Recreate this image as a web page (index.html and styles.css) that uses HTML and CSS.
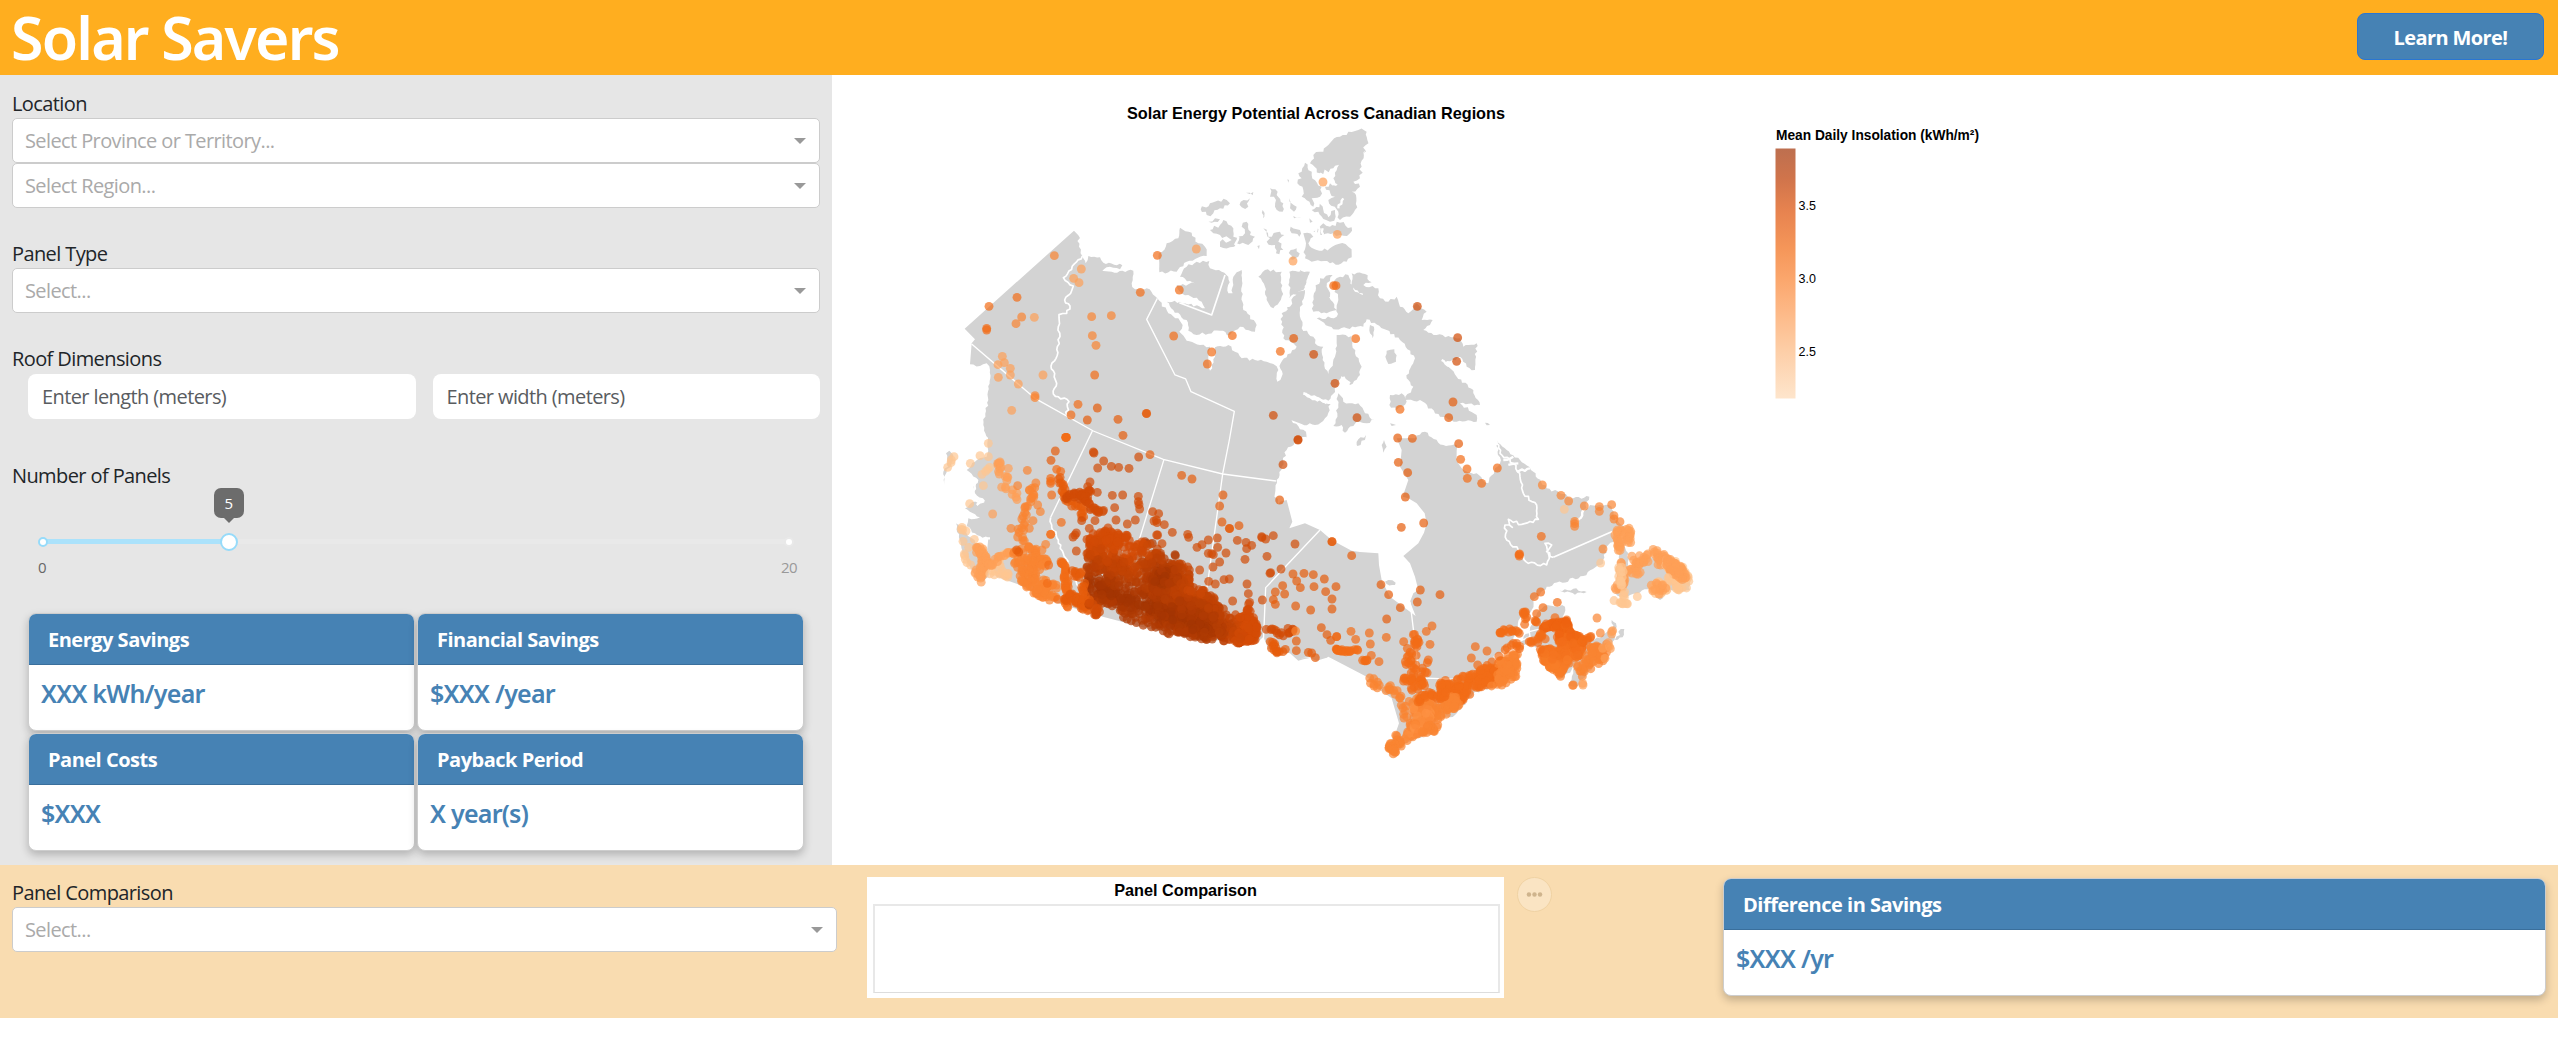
FILE: index.html
```html
<!DOCTYPE html>
<html lang="en">
<head>
<meta charset="utf-8">
<title>Solar Savers</title>
<link rel="stylesheet" href="styles.css">
</head>
<body>
<header class="topbar">
  <h1>Solar Savers</h1>
  <button class="learn">Learn More!</button>
</header>
<main class="main">
  <aside class="panel">
    <section class="field location">
      <label>Location</label>
      <div class="select">Select Province or Territory...<i class="caret"></i></div>
      <div class="select">Select Region...<i class="caret"></i></div>
    </section>
    <section class="field type">
      <label>Panel Type</label>
      <div class="select">Select...<i class="caret"></i></div>
    </section>
    <section class="field roof">
      <label>Roof Dimensions</label>
      <div class="inputs">
        <div class="input">Enter length (meters)</div>
        <div class="input">Enter width (meters)</div>
      </div>
    </section>
    <section class="field count">
      <label>Number of Panels</label>
      <div class="slider">
        <div class="fill"></div>
        <span class="stop on"></span>
        <span class="stop end"></span>
        <span class="handle"><span class="tip">5</span></span>
      </div>
      <div class="marks"><span>0</span><span class="max">20</span></div>
    </section>
    <section class="cards">
      <article class="card"><h2>Energy Savings</h2><p>XXX kWh/year</p></article>
      <article class="card"><h2>Financial Savings</h2><p>$XXX /year</p></article>
      <article class="card"><h2>Panel Costs</h2><p>$XXX</p></article>
      <article class="card"><h2>Payback Period</h2><p>X year(s)</p></article>
    </section>
  </aside>
  <svg class="map" viewBox="832 75 1726 790" role="img">
    <defs>
      <linearGradient id="ramp" x1="0" y1="0" x2="0" y2="1">
        <stop offset="0" stop-color="#bd6f4f"/>
        <stop offset=".12" stop-color="#d0744b"/>
        <stop offset=".25" stop-color="#e7834f"/>
        <stop offset=".4" stop-color="#f59659"/>
        <stop offset=".52" stop-color="#fba66c"/>
        <stop offset=".65" stop-color="#fdb886"/>
        <stop offset=".8" stop-color="#fdcda5"/>
        <stop offset="1" stop-color="#fee5cc"/>
      </linearGradient>
    </defs>
    <g transform="translate(920 80) scale(.33333)">
      <g id="land" fill="#d3d3d3"></g>
      <g id="lines" fill="none" stroke="#fff" stroke-width="4" stroke-linejoin="round"></g>
      <g id="dots" fill-opacity=".7"></g>
    </g>
    <g class="chart-text">
      <text class="map-title" x="1127" y="119" textLength="378">Solar Energy Potential Across Canadian Regions</text>
      <text class="legend-title" x="1776" y="140" textLength="203">Mean Daily Insolation (kWh/m²)</text>
      <rect x="1775.5" y="148.5" width="20" height="250" fill="url(#ramp)"/>
      <text x="1798.5" y="210">3.5</text>
      <text x="1798.5" y="283">3.0</text>
      <text x="1798.5" y="356">2.5</text>
    </g>
  </svg>
</main>
<footer class="compare">
  <section class="pick">
    <label>Panel Comparison</label>
    <div class="select">Select...<i class="caret"></i></div>
  </section>
  <section class="chart">
    <h3>Panel Comparison</h3>
    <div class="plot"></div>
  </section>
  <button class="more" aria-label="Chart actions">
    <svg viewBox="0 0 34 34"><circle cx="11.3" cy="17" r="2.3"/><circle cx="17" cy="17" r="2.3"/><circle cx="22.7" cy="17" r="2.3"/></svg>
  </button>
  <article class="card diff"><h2>Difference in Savings</h2><p>$XXX /yr</p></article>
</footer>
<script src="map.js"></script>
</body>
</html>
```
FILE: styles.css
```css
* { box-sizing: border-box; }
body {
  margin: 0;
  background: #fff;
  color: #212529;
  font: 20px/30px "Open Sans", "Noto Sans", sans-serif;
  letter-spacing: -0.6px;
}
h1, h2, h3, p { margin: 0; }
.topbar {
  display: flex;
  justify-content: space-between;
  align-items: flex-start;
  height: 75px;
  padding: 0 14px 0 11px;
  background: #ffae1f;
}
.topbar h1 {
  color: #fff;
  font-family: "Noto Sans", "Open Sans", sans-serif;
  font-size: 59px;
  font-weight: 600;
  line-height: 75px;
  letter-spacing: -1.8px;
}
.learn {
  width: 187px;
  height: 47px;
  margin-top: 13px;
  padding: 2px 0 0;
  border: 1px solid #2a76d2;
  border-radius: 8px;
  background: #4682b4;
  color: #fff;
  font: 700 20px/30px "Open Sans", sans-serif;
  letter-spacing: -0.6px;
}
.main { display: flex; height: 790px; }
.panel {
  display: flex;
  flex-direction: column;
  width: 832px;
  padding: 13px 12px 0;
  background: #e6e6e6;
}
label { display: block; height: 30px; line-height: 32px; }
.select {
  display: flex;
  justify-content: space-between;
  align-items: center;
  height: 45px;
  padding: 0 13px 0 12px;
  border: 1px solid #ccc;
  border-radius: 5px;
  background: #fff;
  color: #aaa;
}
.caret {
  border: 6px solid transparent;
  border-top: 6px solid #999;
  border-bottom: 0;
}
.location { height: 150px; }
.type { height: 105px; }
.roof { height: 117px; }
.roof .inputs { display: flex; gap: 17px; padding: 1px 0 0 16px; }
.input {
  flex: 1;
  height: 45px;
  padding: 8px 14px;
  border-radius: 8px;
  background: #fff;
  color: #595c5f;
}
.count { height: 153px; }
.slider {
  position: relative;
  width: 746px;
  height: 5px;
  margin: 49px 0 0 31px;
  border-radius: 6px;
  background: #e9e9e9;
}
.fill { width: 25%; height: 5px; background: #abe2fb; }
.stop {
  position: absolute;
  top: -2.5px;
  left: -5px;
  width: 10px;
  height: 10px;
  border: 2px solid #96dbfa;
  border-radius: 50%;
  background: #fff;
}
.stop.end { left: auto; right: -5px; border-color: #e9e9e9; }
.handle {
  position: absolute;
  top: -6.5px;
  left: calc(25% - 10px);
  width: 18px;
  height: 18px;
  border: 2px solid #96dbfa;
  border-radius: 50%;
  background: #fff;
}
.tip {
  position: absolute;
  left: -8px;
  bottom: 31px;
  width: 30px;
  height: 30px;
  border-radius: 7px;
  background: #6c6c6c;
  color: #fff;
  font-size: 15px;
  text-align: center;
}
.tip::after {
  content: "";
  position: absolute;
  left: 10px;
  top: 30px;
  border: 5px solid transparent;
  border-top-color: #6c6c6c;
  border-bottom: 0;
}
.marks {
  display: flex;
  justify-content: space-between;
  margin: 8px 23px 0 26px;
  color: #666;
  font-size: 15px;
}
.marks .max { color: #999; }
.cards {
  display: grid;
  grid-template-columns: 387px 387px;
  gap: 2px;
  padding-left: 16px;
}
.card {
  height: 118px;
  border: 1px solid #cdcdcd;
  border-radius: 8px;
  background: #fff;
  box-shadow: 0 4px 8px rgba(0, 0, 0, .22);
  overflow: hidden;
}
.card h2 {
  height: 51px;
  padding: 11px 19px;
  border-bottom: 1px solid #3a6f9c;
  background: #4682b4;
  color: #fff;
  font-size: 20px;
  font-weight: 700;
  line-height: 30px;
  letter-spacing: -0.5px;
}
.card p {
  padding: 13px 12px;
  color: #4682b4;
  font-family: "Noto Sans", "Open Sans", sans-serif;
  font-size: 25px;
  font-weight: 600;
  letter-spacing: -0.75px;
}
.map { width: 1726px; height: 790px; }
.chart-text { font: 12.5px "Liberation Sans", Arial, sans-serif; letter-spacing: 0; }
.map-title { font-size: 16.25px; font-weight: 700; }
.legend-title { font-size: 13.75px; font-weight: 700; }
.compare {
  display: flex;
  align-items: flex-start;
  height: 153px;
  padding: 12px;
  background: #f9dcb0;
}
.pick { width: 825px; }
.chart {
  width: 637px;
  height: 121px;
  margin-left: 30px;
  padding: 3px 4px 0 6px;
  background: #fff;
}
.chart h3 {
  height: 24px;
  padding-right: 2px;
  color: #000;
  font: 700 16.25px/20px "Liberation Sans", Arial, sans-serif;
  letter-spacing: 0;
  text-align: center;
}
.plot { height: 89px; border: 2px solid #e8e8e8; border-bottom: 1px solid #ddd; }
.more {
  width: 35px;
  height: 35px;
  margin-left: 13px;
  padding: 0;
  border: 1px solid #f0d2a3;
  border-radius: 50%;
  background: #fae4c3;
}
.more svg { display: block; width: 33px; height: 33px; fill: #cfb48d; }
.diff { width: 823px; margin: 1px 0 0 auto; }
```
FILE: map.js
```js
// Map sheets share one grid; each offset moves a sheet's points onto it.
const SHEET = { A: [0, 0], B: [1140, 0], C: [0, 1050], D: [1140, 1050], E: [750, 120] };
let seed = 7;
const rnd = () => (seed = (seed * 16807) % 2147483647) / 2147483647;
const pts = (s, str) => str.trim().split(/\s+/).map(p => {
  const [x, y] = p.split(',').map(Number);
  return [x + SHEET[s][0], y + SHEET[s][1]];
});
const rough = (p, amp) => {
  const out = [];
  p.forEach((a, i) => {
    out.push(a);
    const b = p[i + 1];
    if (!b) return;
    const dx = b[0] - a[0], dy = b[1] - a[1], l = Math.hypot(dx, dy), n = Math.floor(l / 8);
    for (let k = 1; k < n; k++) {
      const j = (rnd() - .5) * (amp || 9);
      out.push([a[0] + dx * k / n - dy / l * j, a[1] + dy * k / n + dx / l * j]);
    }
  });
  return out;
};
const d = p => 'M' + p.map(q => q.map(v => v.toFixed(1)).join(' ')).join('L');
const add = (id, tag, at) => {
  const e = document.createElementNS('http://www.w3.org/2000/svg', tag);
  for (const k in at) e.setAttribute(k, at[k]);
  document.getElementById(id).appendChild(e);
};
const land = (...parts) => {
  let all = [];
  for (const [s, str, smooth] of parts) all = all.concat(smooth ? pts(s, str) : rough(pts(s, str), s === 'E' ? 13 : 9));
  add('land', 'path', { d: d(all) + 'Z' });
};
const line = (s, str, w, r) => add('lines', 'path', { d: d(r ? rough(pts(s, str)) : pts(s, str)), 'stroke-width': w || 4 });

// Mainland
land(
  ['A', '134,746 462,452', 1],
  ['A', '475,466 477,500 487,528 497,550 505,528 540,532 550,548 607,556 600,568 570,560 545,575 525,568 575,575 640,572 635,610 645,628 680,625 712,655 745,700 775,715 788,735 778,755 800,782 840,795 870,800 865,840 870,872 885,830 885,802 925,795 945,815 965,835 1005,840 1040,845 1060,852 1075,870 1072,905 1085,890 1082,850 1100,832 1130,800 1120,790 1090,775 1085,700 1110,680 1120,650 1130,635 1155,630 1140,690 1145,745 1180,770 1185,790 1210,800 1208,840 1225,882 1245,830 1250,790'],
  ['B', '110,765 155,768 165,820 185,860 180,885 150,915 125,888 110,920 85,962 45,950 10,937 30,955 92,972 75,1015 45,1035 5,1032'],
  ['A', '1105,1017 1150,1050 1162,1075'],
  ['C', '1158,20 1130,30 1100,60 1085,110 1070,150 1065,190 1078,235 1080,215'],
  ['C', '1100,210 1117,275 1108,295 1155,280 1200,300', 1],
  ['D', '95,330 155,362 180,366 235,370 237,405 245,450 270,500 310,530 347,558 330,515 340,490 355,480 345,440 330,400 310,378', 1],
  ['D', '355,340 372,308 380,280 374,250 350,220 325,205 308,200 325,150 300,110 305,60 290,25', 1],
  ['D', '345,25 375,5 430,45 470,45 470,90 490,120 530,130 565,160 585,115 600,100 590,30 620,60 660,90 700,125 740,175 780,190 820,205 868,200 860,215 850,250 825,280 840,255 870,225 900,225 935,230 945,270 975,290 945,330 920,350 910,400 850,438 740,470 700,510 695,540 660,565 640,640 580,680 600,760 520,790 465,855 410,870 400,910 330,935 280,970 262,945 290,900'],
  ['D', '297,880 275,805 240,780 200,740 85,680 50,692 30,682 0,685', 1],
  ['C', '1225,682 1190,692 1170,684 1150,688 1135,692 1110,670 1045,658 1030,620 1010,640 900,632 700,600 520,553 400,515 300,465 230,440 200,375', 1],
  ['C', '205,325 165,310 140,288 145,265 180,262 135,235 160,215 195,212 165,190 160,170 175,150 140,120 165,95 200,80 205,20'],
  ['A', '205,1075 190,1035 205,960 210,870 200,850 180,858 150,853'],
  ['A', '155,790 165,778 134,746', 1]
);
// Arctic islands
[
  ['A', '780,443 815,458 835,490 855,500 860,528 800,545 770,575 718,577 715,530 740,490 775,475 780,443'],
  ['A', '800,560 830,545 868,543 870,565 905,575 925,590 925,640 938,640 940,590 965,570 970,690 1010,735 1005,755 960,740 930,765 900,752 830,765 805,752 800,720 760,690 740,665 780,665 855,685 845,665 780,635 770,615 825,610 780,590 800,560'],
  ['A', '1015,590 1035,570 1085,575 1085,650 1060,685 1040,660 1035,620 1015,590'],
  ['A', '1108,575 1170,575 1150,630 1108,655 1108,575'],
  ['E', '535,35 565,30 590,35 592,60 580,100 588,90 575,140 570,175 550,185 570,200 545,215 558,225 555,270 540,290 510,300 505,275 475,240 495,230 465,200 480,190 505,195 490,175 515,120 490,145 450,160 420,130 430,105 460,95 475,75 510,50 535,35'],
  ['E', '405,128 425,165 455,200 450,230 425,235 430,260 395,230 400,210 382,190 395,175 385,160 405,128'],
  ['E', '450,240 460,270 475,292 495,270 497,290 480,305 460,297 445,275 425,270 448,262 450,240'],
  ['E', '418,295 428,305 420,308 418,295'],
  ['E', '400,340 430,350 415,370 440,390 480,385 505,372 535,380 545,400 530,425 480,430 425,425 405,415 408,370 400,340'],
  ['E', '430,335 460,310 480,320 510,308 545,322 540,340 510,345 490,340 450,345 430,335'],
  ['E', '92,268 120,250 170,240 180,250 150,265 130,280 110,285 92,268'],
  ['E', '120,330 150,315 160,300 190,325 190,350 225,340 215,320 230,305 240,345 255,350 235,375 200,370 180,382 150,380 150,365 185,360 150,345 130,340 120,330'],
  ['E', '115,305 135,295 150,298 125,308 115,305'],
  ['E', '212,245 240,235 235,260 215,262 212,245'],
  ['E', '228,218 250,216 248,226 228,218'],
  ['E', '300,205 316,208 320,225 340,250 338,275 315,260 318,240 300,230 300,205'],
  ['E', '357,235 380,260 372,275 360,265 357,235'],
  ['E', '370,288 395,292 372,295 370,288'],
  ['E', '362,320 390,330 388,350 365,340 362,320'],
  ['E', '280,325 295,350 330,335 343,345 325,365 340,390 318,400 315,375 290,365 300,355 280,325'],
  ['E', '362,390 380,385 385,410 360,418 362,390'],
  ['E', '278,270 283,290 279,295 278,270'],
  ['E', '262,378 269,376 267,388 262,378'],
  ['E', '352,178 357,180 355,188 352,178'],
  ['B', '60,595 98,585 80,620 90,650 110,690 80,700 40,695 42,640 60,595'],
  ['B', '0,570 28,580 10,630 0,628 0,570'],
  ['B', '120,590 145,585 165,635 200,650 160,622 155,580 195,582 215,607 190,615 235,625 240,655 265,665 290,650 300,680 325,700 350,670 380,695 365,720 398,720 370,750 410,765 480,775 490,800 530,790 525,870 500,860 480,830 435,850 470,890 520,930 540,975 480,970 530,1005 530,1025 470,1025 420,1010 360,960 315,960 340,920 320,895 345,835 300,780 260,750 200,718 190,740 100,748 50,715 110,710 115,660 100,610 120,590'],
  ['B', '260,812 283,808 288,845 265,852 256,830 260,812'],
  ['B', '115,940 130,965 175,970 195,1000 225,1020 200,1030 170,1025 135,1058 125,1035 100,1038 112,1000 115,940'],
  ['B', '270,945 305,940 320,965 290,990 268,975 270,945'],
  ['B', '210,735 222,740 218,775 210,760 210,735'],
  ['B', '270,1030 288,1035 275,1038 270,1030'],
  ['B', '555,1028 570,1035 560,1036 555,1028'],
  ['D', '170,45 175,28 198,15 195,30 172,48'],
  ['D', '245,45 252,30 260,50 250,68 245,45'],
  ['D', '0,0 18,5 20,20 0,28'],
  ['D', '778,482 820,476 860,486 825,494 778,482'],
  ['D', '255,455 265,450 287,458 285,465 260,462'],
  ['D', '970,330 985,370 985,420 1050,380 1100,400 1165,440 1170,480 1110,480 1080,510 1050,470 1010,490 965,500 945,490 960,440 958,350 970,330'],
  ['D', '700,560 740,525 795,530 788,560 800,600 840,630 900,625 930,600 945,620 900,690 860,730 830,770 805,765 820,730 830,700 790,745 740,700 715,650 655,640 690,600 700,560'],
  ['D', '935,570 948,580 945,600 938,605 935,570'],
  ['D', '955,605 973,597 968,622 945,630 960,615 955,605'],
  ['C', '78,70 88,62 100,75 95,100 80,118 74,165 70,125 84,110 78,70'],
  ['C', '108,280 140,310 205,370 205,440 190,455 150,410 125,370 120,330 108,280']
].forEach(p => land(p));

// Provincial borders
line('A', '487,528 430,593 460,618 452,640 434,660 450,678 440,700 417,704 415,740 420,770 412,800 408,835 393,858 404,880 410,910 400,942 447,965 440,1005', 5, 1);
line('A', '155,792 345,955 520,1053 730,1138 908,1182 1068,1203');
line('A', '712,655 680,718 765,885 797,897 813,935 943,994 928,1080 908,1182 860,1530');
line('A', '517,1053 392,1312', 4);
line('C', '392,262 395,285 415,330 430,370 445,400 455,440 475,470', 5, 1);
line('C', '732,88 645,370 600,560');
line('C', '1200,300 1037,473 1030,640');
line('A', '915,585 875,705 778,668', 5);
line('D', '330,515 358,744 400,745 470,748');
line('D', '590,30 600,70 640,100 660,140 670,190 710,225 715,268 665,283 625,268 637,292 615,285 620,330 655,360 685,400 740,405 748,385 735,340 755,345 740,365 760,382', 5, 1);
line('D', '760,382 935,305 950,325', 5);
line('D', '645,640 690,620 688,605 715,598');
// Inlets and channels
[['E', '450,160 470,180 500,195'], ['E', '505,265 520,235'], ['E', '195,375 205,350'],
 ['E', '435,320 437,345'], ['E', '445,320 448,345'], ['E', '458,325 460,345'], ['B', '90,650 110,665'], ['B', '425,840 500,890'], ['B', '130,890 150,910'],
 ['A', '1098,575 1100,690'], ['A', '880,780 925,775'], ['A', '930,780 990,765'], ['A', '1150,940 1220,970'],
 ['C', '150,210 190,215 170,225'], ['C', '130,150 165,160 160,200'], ['C', '180,340 210,325'],
 ['D', '610,90 640,80'], ['D', '625,105 655,100'], ['D', '650,125 690,115'], ['D', '830,285 850,240']].forEach(([s, p]) => line(s, p, 7, 1));

// Stations: single readings, then dense runs and fields
const dot = (x, y, c) => add('dots', 'circle', { cx: x.toFixed(1), cy: y.toFixed(1), r: 13.3, fill: c });
const dots = (s, c, str) => pts(s, str).forEach(p => dot(p[0], p[1], c));
const trail = (s, c, n, spread, str) => {
  const p = pts(s, str);
  for (let i = 0; i < n; i++) {
    const t = (i + rnd() * .6) / n * (p.length - 1), k = Math.floor(t), f = t - k;
    const a = p[k], b = p[Math.min(k + 1, p.length - 1)];
    dot(a[0] + (b[0] - a[0]) * f + (rnd() - .5) * spread, a[1] + (b[1] - a[1]) * f + (rnd() - .5) * spread, c);
  }
};
const inside = (x, y, p) => {
  let r = false;
  for (let i = 0, j = p.length - 1; i < p.length; j = i++)
    if ((p[i][1] > y) !== (p[j][1] > y) && x < (p[j][0] - p[i][0]) * (y - p[i][1]) / (p[j][1] - p[i][1]) + p[i][0]) r = !r;
  return r;
};
const field = (s, c, n, str) => {
  const p = pts(s, str), xs = p.map(q => q[0]), ys = p.map(q => q[1]);
  const x0 = Math.min(...xs), x1 = Math.max(...xs), y0 = Math.min(...ys), y1 = Math.max(...ys);
  while (n > 0) {
    const x = x0 + rnd() * (x1 - x0), y = y0 + rnd() * (y1 - y0);
    if (inside(x, y, p)) { dot(x, y, typeof c === 'function' ? c(x - SHEET[s][0], y - SHEET[s][1]) : c); n--; }
  }
};
const K0 = '#fdc692', K1 = '#fd9f57', K2 = '#fa8432', K3 = '#f26c17', K4 = '#e65c0c', K5 = '#d14c05', K6 = '#b03b03', K7 = '#a03403';
const mix = (a, b, t) => 'rgb(' + a.map((v, i) => Math.round(v + (b[i] - v) * Math.max(0, Math.min(1, t)))).join() + ')';
// Prairie readings peak along a line from Medicine Hat to Estevan
const prairie = (x, y) => {
  const ax = 520, ay = 470, bx = 850, by = 590, l2 = (bx - ax) ** 2 + (by - ay) ** 2;
  const t = Math.max(0, Math.min(1, ((x - ax) * (bx - ax) + (y - ay) * (by - ay)) / l2));
  const dist = Math.hypot(x - ax - t * (bx - ax), y - ay - t * (by - ay));
  const peak = Math.min(dist, Math.hypot(x - 725, y - 445) * 1.1);
  return mix([162, 52, 3], [212, 76, 5], peak / 130 + (rnd() - .5) * .25);
};

dots('A', K1, '484,567 461,595 477,608 343,712 247,829 234,854 253,848 271,865 271,885 235,892 295,912 369,885 275,991 829,507 1119,543 1209,306 1252,463');
dots('A', K2, '345,947 345,953 403,527 305,711 288,731 515,710 574,707 517,767 528,796');
dots('A', K3, '712,526 661,637 778,630 207,679 291,652 200,745 200,750 524,885 474,973 453,1005 437,1072 439,1072 761,768 937,767 875,816 862,852 1081,814 1241,617');
dots('A', K4, '532,984 502,1020 594,1018 679,1000 680,1001 609,1066 1121,775');
dots('A', K5, '1181,823 1245,910 1060,1006 1134,1079');
dots('B', K3, '108,617 167,776 300,988');
dots('B', K5, '352,679 473,773 470,844 171,1013');
dots('B', K4, '459,966 446,1013');

dots('C', K0, '205,40 180,77 151,100 205,80 190,167 149,221 102,80 93,98 83,112 94,90 186,133 203,118 209,112 197,124 126,292 128,300 138,303 129,334 146,352 163,328 124,298 134,377 136,388 141,398 152,405 165,430 133,372');
trail('C', K1, 20, 14, '228,100 240,98 238,128 262,140 250,175 285,190 300,205');
dots('C', K1, '218,252 240,96 265,115 173,354 178,365 182,372');
trail('C', K1, 50, 22, '172,350 185,370 190,390 195,415 175,425 190,450');
trail('C', K0, 20, 14, '205,430 230,430 255,437 270,430 230,400 245,380 275,365');
trail('C', K1, 20, 12, '190,390 210,410 240,378 280,370');
trail('C', K2, 30, 16, '349,160 330,182 345,200 325,225 320,245 310,265 305,290 300,310 315,335 340,355 350,360');
dots('C', K2, '322,121 293,167 361,245 339,272 273,295 328,295 392,313 377,343 366,360 293,321 353,225 341,202 329,181');
field('C', K2, 80, '280,360 330,350 385,390 375,420 340,450 310,470 290,410 270,380');
field('C', K2, 60, '300,450 350,445 380,450 410,440 415,490 400,515 350,495 300,465');
dots('C', K4, '290,360 296,366 406,63 393,91');
dots('C', K3, '437,22 439,22 410,118 422,124 392,145 392,154 392,160 395,195 424,277 423,395 424,400 386,405 392,313 382,460 413,508');
trail('C', K3, 34, 12, '425,395 435,420 440,450 440,475 440,510 442,530');
trail('C', K4, 42, 22, '440,500 465,505 490,520 500,535');
trail('C', K4, 28, 14, '420,145 428,170 435,200 455,220 490,240 485,270');
trail('C', K5, 24, 18, '440,200 460,195 480,190 500,190 515,188');
trail('C', K5, 10, 14, '490,200 500,212 480,200');
trail('C', K5, 16, 14, '490,200 512,230 535,240 550,252');
dots('C', K5, '520,66 522,69 551,93 533,114 574,109 596,112 627,115 656,81 510,156 503,170 532,187 577,196 608,195 655,199 655,215 657,224 659,237 584,233 525,272 588,270 622,282 646,270 698,245 716,251 709,270 711,278 733,284 757,307 702,273 713,315 710,315 803,313 806,322 726,341 485,272 469,309 459,321 465,315 469,363 508,295');
dots('C', K4, '690,74 909,195 899,228 906,276 928,295 929,296 957,287 785,136 816,147');
dots('C', K5, '831,352 846,344 865,330 892,324 893,352 918,369 865,370 875,371 880,374 899,396 879,411 952,331 978,337 980,356 995,346 975,388 1025,320 1026,323 1037,327 1060,317 1125,342 1041,379 1050,430 1052,428 1083,417 839,420 866,454 886,462 912,449 928,447 981,462 985,491 1027,510 989,517 986,522 938,513');
dots('C', K6, '765,374 766,377 697,340 680,340 675,335');
dots('C', K5, '1134,30 1089,104');
dots('C', K4, '1079,210 1236,335 1119,432 1152,430 1180,434 1213,447 1130,453 1141,473 1182,470 1217,485 1236,507 1236,537 1248,470 1088,467 1066,486 1094,492 1060,509 1066,523 1127,528 1172,540 1204,593 1221,614 1232,631 1250,620 1129,633 1129,662 1062,598');
trail('C', K5, 15, 14, '1035,602 1075,605 1098,612 1115,595 1110,605');
trail('C', K4, 14, 12, '1055,640 1065,640 1055,663 1075,667 1100,658');
dots('C', K4, '1165,667 1175,669 1186,683 1252,658 1250,658');
dots('C', K2, '1127,603');

field('C', prairie, 850, '510,320 550,310 600,295 640,330 715,345 740,390 810,410 815,470 880,488 905,525 925,550 1000,560 1015,590 1000,630 950,640 820,624 740,603 650,565 600,545 560,525 495,525 500,400');
field('C', prairie, 380, '690,420 765,410 800,470 870,500 910,550 910,620 800,622 740,590 700,520');
field('C', prairie, 60, '500,320 550,290 610,285 620,320 560,400 495,420');
field('C', prairie, 90, '935,580 1010,580 1012,630 950,642 935,620');
field('C', prairie, 26, '1015,620 935,560 1000,530');
trail('C', K4, 20, 20, '460,430 480,430 490,480 500,520');
trail('C', K5, 14, 12, '520,550 535,550 530,535 500,520');
trail('C', K6, 10, 8, '600,562 655,577 720,600 760,612');
line('C', '580,468 594,478 592,500 580,510', 6);

dots('D', K4, '293,24 337,25 295,97 323,128 316,201 371,279 304,292 96,335 155,377 243,464 266,494 301,533 361,480 352,516 420,494 260,567 476,41');
dots('D', K3, '482,88 501,117 502,145 545,160 592,114 153,604 167,628 208,609 211,642 259,622 110,620 214,676 237,695 396,588 379,604 390,643 311,635 322,655 526,650 561,663 514,684 533,705 724,319 657,374 659,372 658,378 722,486 703,500 772,517 729,533 710,551');
trail('D', K3, 16, 8, '105,658 125,660 148,663 178,662');
trail('D', K3, 5, 8, '190,693 202,690');
dots('D', K2, '727,165 783,196 806,213 853,228 898,230 898,244 935,224 942,257 942,267 960,275 824,274 824,281 824,289 909,357');
dots('D', K0, '793,238 902,399 1012,500');
trail('D', K1, 38, 12, '988,300 962,300 948,312 955,345 958,360 978,310 990,340 988,295');
trail('D', K1, 36, 16, '960,400 962,430 970,470 950,475 985,425 1020,425 1000,390');
trail('D', K0, 24, 18, '950,515 975,520 965,470 965,440 960,400');
trail('D', K1, 40, 26, '1000,380 1030,395 1060,370 1090,380 1080,395 1120,400');
field('D', K0, 60, '1100,385 1130,395 1150,410 1172,450 1165,478 1130,482 1105,440 1095,420');
field('D', K1, 45, '1090,380 1140,400 1165,450 1140,450 1105,420');
field('D', K0, 34, '1052,460 1105,440 1100,490 1080,510 1060,490');
field('D', K1, 12, '1052,460 1105,440 1100,490 1080,510 1060,490');
trail('D', K3, 26, 26, '345,620 355,640 345,665 325,690 345,700 340,730 380,725');
dots('D', K3, '385,690 382,698 376,726 353,630 357,637 352,640 316,695');
trail('D', K3, 26, 18, '310,748 330,748 355,748 370,770 330,780');
trail('D', K2, 26, 20, '215,745 225,765 260,778 285,770 305,800 315,840 320,875');
field('D', K2, 90, '305,820 350,800 390,800 410,830 450,845 400,905 340,920 320,935 330,880 350,820');
field('D', (x, y) => mix([253, 148, 70], [250, 132, 50], rnd()), 75, '340,830 390,830 395,870 350,915 310,930 340,870');
trail('D', K2, 34, 16, '290,915 300,940 268,945 280,960 285,968');
trail('D', K2, 10, 12, '400,905 390,885 360,915');
field('D', K3, 90, '415,745 450,755 500,770 510,795 460,835 420,790');
field('D', K2, 45, '420,800 470,800 480,825 440,850 425,830');
trail('D', K3, 24, 16, '350,810 385,795 415,800 440,790');
field('D', K3, 110, '510,735 570,705 620,690 650,690 640,730 600,760 540,775 500,770');
field('D', K2, 60, '590,690 655,665 650,740 610,765 570,770 600,720');
trail('D', K3, 20, 12, '465,745 495,740 520,735 590,680 645,640 660,660');
trail('D', K3, 10, 12, '600,608 620,604 645,598 658,610');
trail('D', K3, 6, 10, '677,585 675,550 670,552');
dots('D', K3, '600,608 602,607 601,609 675,548 673,554 710,576 707,575 705,572 765,563 800,570 650,640 688,635 693,635');
field('D', (x, y) => mix([238, 98, 15], [245, 118, 32], (y - 570) / 120 + (rnd() - .5) * .3), 100, '722,598 740,580 803,572 808,605 790,600 750,592');
field('D', (x, y) => mix([238, 98, 15], [248, 125, 40], (y - 590) / 120 + (rnd() - .5) * .3), 230, '720,655 775,655 770,610 810,600 855,630 850,670 800,705 782,740 755,718 728,690');
trail('D', K3, 10, 14, '690,635 730,625 720,610');
trail('D', K3, 8, 12, '840,640 860,625 878,625');
field('D', K2, 60, '870,650 925,640 915,690 880,710 850,740 840,760 835,720 828,710 860,680');
dots('D', K2, '891,564 901,609 818,766 820,765 833,707');
dots('D', K1, '849,765 848,760 935,605 938,602 925,638 928,650 931,656 915,685 908,655 935,612');
```
